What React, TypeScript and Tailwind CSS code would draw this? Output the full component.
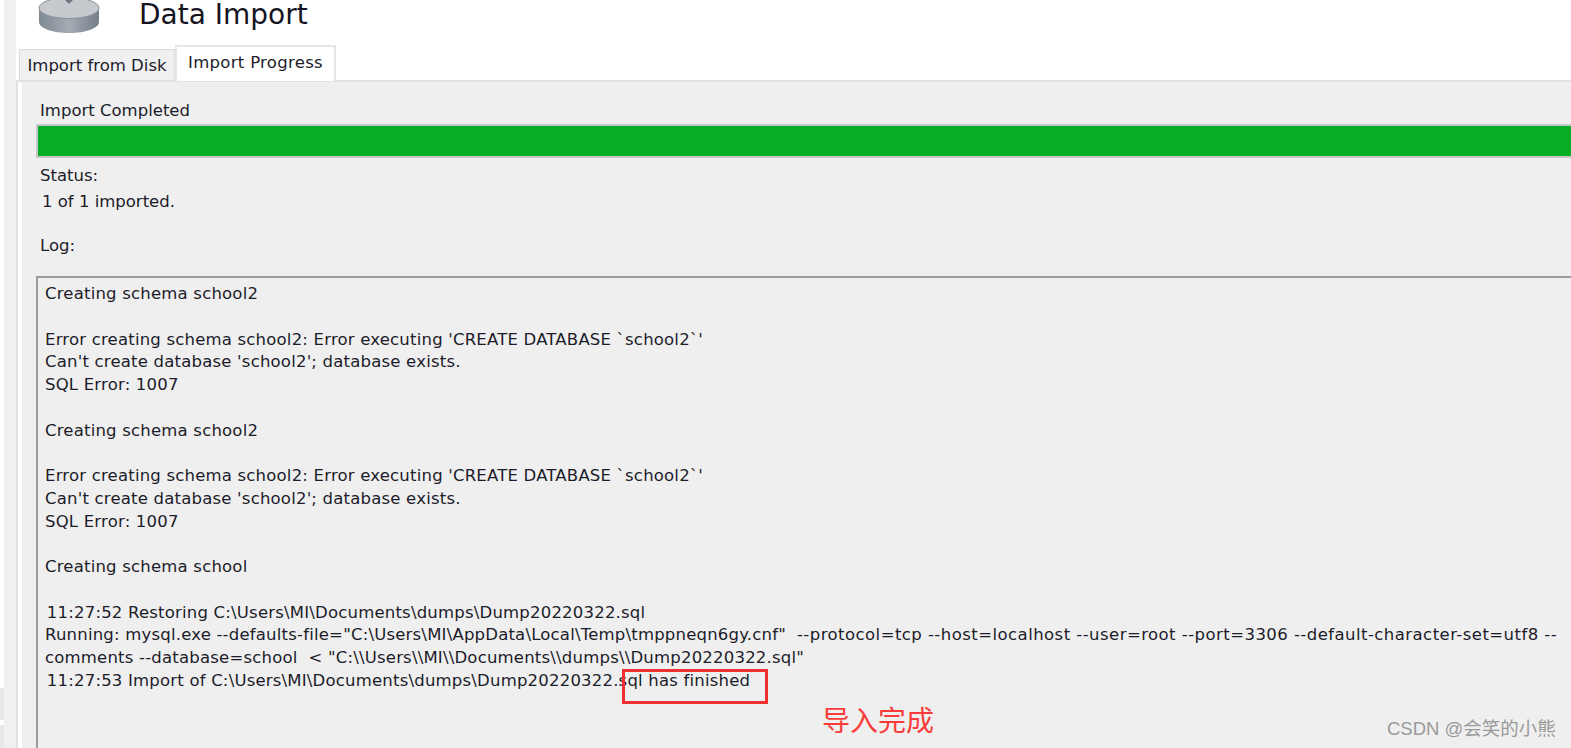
import React from 'react';

const uiFont = { fontFamily: '"DejaVu Sans", "Noto Sans", sans-serif' };

const logLines = [
  'Creating schema school2',
  '',
  "Error creating schema school2: Error executing 'CREATE DATABASE `school2`'",
  "Can't create database 'school2'; database exists.",
  'SQL Error: 1007',
  '',
  'Creating schema school2',
  '',
  "Error creating schema school2: Error executing 'CREATE DATABASE `school2`'",
  "Can't create database 'school2'; database exists.",
  'SQL Error: 1007',
  '',
  'Creating schema school',
  '',
  '\u200a11:27:52 Restoring C:\\Users\\MI\\Documents\\dumps\\Dump20220322.sql',
  <>
    {'Running: mysql.exe --defaults-file="C:\\Users\\MI\\AppData\\Local\\Temp\\tmppneqn6gy.cnf"  '}
    <span className="tracking-[0.45px]">--protocol=tcp --host=localhost --user=root --port=3306 --default-character-set=utf8 --</span>
  </>,
  'comments --database=school  < "C:\\\\Users\\\\MI\\\\Documents\\\\dumps\\\\Dump20220322.sql"',
  '\u200a11:27:53 Import of C:\\Users\\MI\\Documents\\dumps\\Dump20220322.sql has finished',
];

const DiskIcon = () => (
  <svg width="62" height="36" viewBox="0 0 62 36" aria-hidden="true">
    <defs>
      <linearGradient id="diskSide" x1="0" x2="1" y1="0" y2="0">
        <stop offset="0" stopColor="#7f8993" />
        <stop offset="0.5" stopColor="#a3abb3" />
        <stop offset="1" stopColor="#757f89" />
      </linearGradient>
    </defs>
    <path d="M1 10v13c0 6 13 11 30 11s30-5 30-11V10z" fill="url(#diskSide)" />
    <ellipse cx="31" cy="9" rx="30" ry="10.5" fill="#c6cace" stroke="#8a929a" />
    <path d="M26 0h10l-5 5z" fill="#6f7780" />
  </svg>
);

export default function App() {
  return (
    <div className="relative flex h-[748px] w-[1571px] overflow-hidden bg-white text-[#1c1c2a]" style={uiFont}>
      <div className="flex w-[4px] shrink-0 flex-col justify-end gap-[5px]">
        <div className="h-[32px] bg-[#e8e8e8]" />
        <div className="h-[23px] bg-[#e8e8e8]" />
      </div>
      <div className="w-[12px] shrink-0 bg-[#f0f0f0]" />

      <div className="flex min-w-0 flex-1 flex-col">
        {/* Header */}
        <div className="flex h-[45px] items-start">
          <div className="ml-[22px] -mt-[1px]">
            <DiskIcon />
          </div>
          <h1 className="ml-[39px] mt-[1px] text-[28px] leading-[28px] font-normal text-[#15151f]">Data Import</h1>
        </div>

        {/* Tabs */}
        <div className="flex h-[35px] items-end pl-[3px]">
          <div className="flex h-[31px] w-[156px] items-center justify-center border border-b-0 border-[#dcdcdc] bg-[#f0f0f0] pt-[2px] text-[16.5px]">
            Import from Disk
          </div>
          <div className="relative -mb-[1px] flex h-[36px] w-[161px] items-center justify-center border-2 border-b-0 border-[#e6e6e6] bg-white pb-[2px] text-[16.5px] tracking-[0.3px]">
            Import Progress
          </div>
        </div>

        {/* Panel */}
        <div className="flex min-h-0 flex-1 flex-col border-t-2 border-l-2 border-[#e2e2e2] bg-[#efefef] pl-[18px] shadow-[inset_4px_0_0_#ffffff]">
          <div className="mt-[17px] pl-[4px] text-[16.5px] leading-[24px]">Import Completed</div>
          <div className="mt-[1px] h-[34px] shrink-0 border-y-2 border-l-2 border-[#c6c6c6] bg-[#07ae25]" />
          <div className="mt-[5px] pl-[4px] text-[16.5px] leading-[26px]">Status:</div>
          <div className="pl-[6px] text-[16.5px] leading-[26px]">1 of 1 imported.</div>
          <div className="mt-[18px] pl-[4px] text-[16.5px] leading-[26px]">Log:</div>

          <div className="mt-[17px] flex-1 border-t-2 border-l-2 border-[#9c9c9c] pt-[5px] pl-[7px]">
            {logLines.map((line, i) => (
              <div key={i} className="h-[22.75px] text-[16.5px] leading-[22.75px] tracking-[0.2px] whitespace-pre">
                {line}
              </div>
            ))}
          </div>
        </div>
      </div>

      {/* Annotations on top of the screenshot */}
      <div className="absolute top-[669px] left-[622px] h-[35px] w-[146px] border-[3px] border-[#f03030]" />
      <div
        className="absolute top-[701px] left-[822px] text-[28px] leading-[36px] text-[#f83c3c]"
        style={{ fontFamily: '"Noto Sans CJK SC", sans-serif' }}
      >
        导入完成
      </div>
      <div
        className="absolute top-[717px] left-[1387px] text-[18.5px] leading-[24px] text-[#9a9a9a]"
        style={{ fontFamily: '"Liberation Sans", "Noto Sans CJK SC", sans-serif' }}
      >
        CSDN @会笑的小熊
      </div>
    </div>
  );
}
